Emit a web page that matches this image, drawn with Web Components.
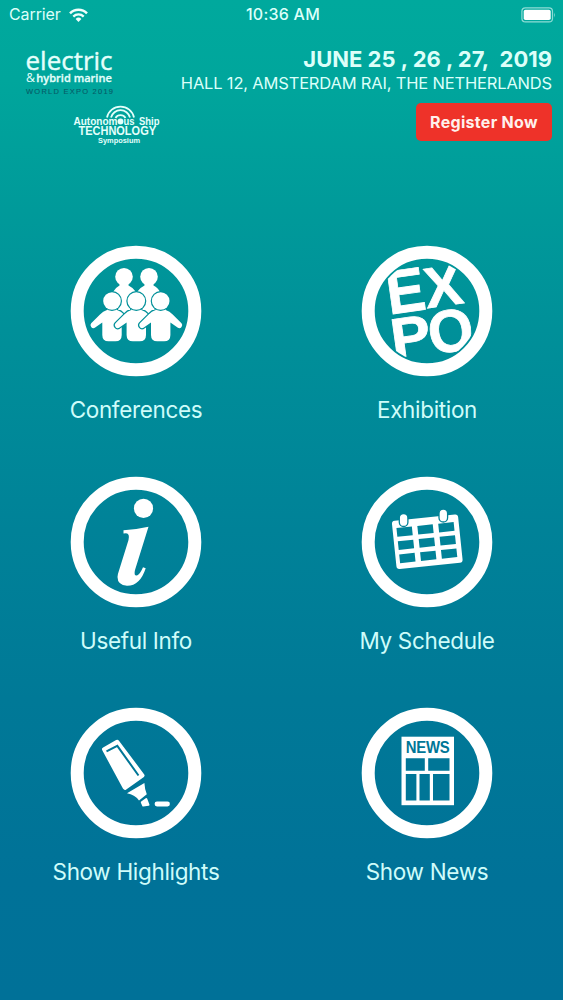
<!DOCTYPE html>
<html lang="en">
<head>
<meta charset="utf-8">
<meta name="viewport" content="width=device-width, initial-scale=1">
<title>Electric &amp; Hybrid Marine World Expo</title>
<style>
    body {
        margin: 0;
        font-family: Inter, "Liberation Sans", sans-serif;
    }
</style>
</head>
<body>
<expo-home>
    <status-bar slot="status" data-carrier="Carrier" data-time="10:36 AM"></status-bar>
    <expo-header slot="header">
        <expo-logos slot="logos"></expo-logos>
        <span slot="dates">JUNE 25 , 26 , 27,&nbsp; 2019</span>
        <span slot="venue">HALL 12, AMSTERDAM RAI, THE NETHERLANDS</span>
        <span slot="action">Register Now</span>
    </expo-header>
    <menu-tile data-icon="conferences">Conferences</menu-tile>
    <menu-tile data-icon="exhibition">Exhibition</menu-tile>
    <menu-tile data-icon="info">Useful Info</menu-tile>
    <menu-tile data-icon="schedule">My Schedule</menu-tile>
    <menu-tile data-icon="highlights">Show Highlights</menu-tile>
    <menu-tile data-icon="news">Show News</menu-tile>
</expo-home>

<script>
// Icons share a 132x132 box, the ring is drawn by the tile itself.
// --hole is the colour of the cut-out parts.
const ICONS = {
    conferences: `
        <defs>
            <g id="front">
                <path d="M-5 6h10v3q4 1 7 4.500L20.800 22.200a3 3 0 0 1-3.600 4.600L9.700 21.500v12.500q0 6.300-6.300 6.300h-6.800q-6.300 0-6.300-6.300V21.500L-17.200 26.800a3 3 0 0 1-3.600-4.600L-12 13.500q3-3.500 7-4.500z"/>
                <circle cx="0" cy="0" r="8.800"/>
            </g>
        </defs>
        <g fill="#fff">
            <path d="M49.500 38h9v2.500q4.500 2 7.500 6.500v23H43V47q2.500-4.500 6.500-6.500z"/>
            <circle cx="54" cy="31.700" r="8.800"/>
            <path d="M74.500 38h9v2.500q4.500 2 6.500 6.500v23H67V47q3-4.500 7.500-6.500z"/>
            <circle cx="79" cy="31.700" r="8.800"/>
        </g>
        <g fill="#fff" stroke="var(--hole)" stroke-width="2.400" paint-order="stroke">
            <use href="#front" x="42" y="56"/>
            <use href="#front" x="66.300" y="56"/>
            <use href="#front" x="90.700" y="56"/>
        </g>`,
    exhibition: `
        <clipPath id="disc"><circle cx="66" cy="66" r="50.500"/></clipPath>
        <g clip-path="url(#disc)" fill="#fff" stroke="#fff" stroke-width=".8" font-family="Liberation Sans, sans-serif" font-weight="700">
            <g transform="translate(28.300 69.500) rotate(-8)">
                <text font-size="62" textLength="38.500" lengthAdjust="spacingAndGlyphs">E</text>
            </g>
            <g transform="translate(66 63.300) rotate(-8)">
                <text font-size="57" textLength="38" lengthAdjust="spacingAndGlyphs">X</text>
            </g>
            <g transform="translate(32.500 113.300) rotate(-8)">
                <text font-size="56" textLength="39.500" lengthAdjust="spacingAndGlyphs">P</text>
            </g>
            <g transform="translate(70 109.500) rotate(-8)">
                <text font-size="60" textLength="45" lengthAdjust="spacingAndGlyphs">O</text>
            </g>
        </g>`,
    info: `
        <circle cx="73.500" cy="32.400" r="9.600" fill="#fff"/>
        <path fill="#fff" d="M53.500 54.300Q66 53.500 78.500 50.700L65 94Q63.500 100 67 99.500 70 98.500 73 91.300L75.700 92.300Q70 110 57 109.800 47.500 109 47.500 101 47.700 98 49 94.500L58.500 64Q60 57.500 56 57.200L53.500 57.600z"/>`,
    schedule: `
        <g transform="translate(66 65.500) rotate(-6)">
            <rect x="-33" y="-24" width="66.500" height="48.500" rx="3" fill="#fff"/>
            <g fill="var(--hole)">
                <path d="M-29-16.500h15.500v8.700h-15.500zM-8-16.500h15.500v8.700h-15.500zM13-16.500h15.500v8.700h-15.500z"/>
                <path d="M-29-3.300h15.500v8.700h-15.500zM-8-3.300h15.500v8.700h-15.500zM13-3.300h15.500v8.700h-15.500z"/>
                <path d="M-29 10h15.500v8.700h-15.500zM-8 10h15.500v8.700h-15.500zM13 10h15.500v8.700h-15.500z"/>
            </g>
        </g>
        <g fill="#fff" stroke="var(--hole)" stroke-width="1.300">
            <rect x="38.300" y="37.500" width="8.600" height="13" rx="4.300"/>
            <rect x="78" y="33" width="8.600" height="13" rx="4.300"/>
        </g>`,
    highlights: `
        <path fill="#fff" stroke="#fff" stroke-width="4.400" stroke-linejoin="round" d="M34.200 42.300 47.200 35 72.300 68.500 55 80.600z"/>
        <path fill="none" stroke="var(--hole)" stroke-width="2" d="M36.500 44.300 47.300 38.800 68.500 68.500"/>
        <path fill="#fff" d="M57 86.200 74.400 76q.2 5.500 2.400 11.200L69 93.400q-4.300-6-12-7.200z"/>
        <path fill="#fff" stroke="#fff" stroke-width="2" stroke-linejoin="round" d="M71.800 95.300 76.300 92 78.500 97.800 73.200 98.500z"/>
        <path stroke="#fff" stroke-width="4.800" stroke-linecap="round" d="M87 97H97.500"/>`,
    news: `
        <rect x="40.500" y="29.700" width="52.500" height="68.500" fill="#fff"/>
        <text x="44.800" y="46.200" fill="var(--hole)" font-family="Liberation Sans, sans-serif" font-weight="700" font-size="17" textLength="43.500" lengthAdjust="spacingAndGlyphs">NEWS</text>
        <path fill="var(--hole)" d="M44.800 51.200h19v12.600h-19zM67.200 51.200h21.300v12.600H67.200zM44.800 67h10.600v26.500H44.800zM58.500 67h10.300v26.500H58.500zM72 67h16.500v26.500H72z"/>`
};

class ExpoHome extends HTMLElement {
    constructor() {
        super();
        this.attachShadow({ mode: 'open' }).innerHTML = `
            <style>
                :host {
                    display: flex;
                    flex-direction: column;
                    min-height: 1000px;
                    background: linear-gradient(#00a99d 0, #00a69c 8%, #009a9a 21%, #009099 33%, #008298 53%, #007997 70%, #007298 88%, #007198 100%);
                }

                main {
                    display: grid;
                    grid-template-columns: 272px 272px;
                    grid-auto-rows: 231px;
                    column-gap: 19px;
                    padding-top: 60px;
                }
            </style>
            <slot name="status"></slot>
            <slot name="header"></slot>
            <main><slot></slot></main>
        `;
    }
}

class StatusBar extends HTMLElement {
    constructor() {
        super();
        this.attachShadow({ mode: 'open' });
    }

    connectedCallback() {
        this.shadowRoot.innerHTML = `
            <style>
                :host {
                    display: grid;
                    grid-template-columns: 1fr auto 1fr;
                    align-items: center;
                    height: 29px;
                    padding: 0 6px 0 9px;
                    color: #dcfff9;
                    font-size: 16px;
                    line-height: 29px;
                }

                .left {
                    display: flex;
                    align-items: center;
                    gap: 8px;
                    letter-spacing: -0.1px;
                }

                .time {
                    font-weight: 500;
                    letter-spacing: 0.25px;
                }

                .battery {
                    justify-self: end;
                }

                svg {
                    display: block;
                }
            </style>
            <div class="left">
                <span>${this.dataset.carrier}</span>
                <svg width="19" height="14" viewBox="0 0 19 14" fill="none" stroke="#f0fffc">
                    <path stroke-width="2.500" d="M1 5.300a12 12 0 0 1 17 0"/>
                    <path stroke-width="2.300" d="M4.300 8.600a7.400 7.400 0 0 1 10.400 0"/>
                    <path fill="#f0fffc" stroke="none" d="M6.600 11a4.200 4.200 0 0 1 5.800 0l-2.900 2.900z"/>
                </svg>
            </div>
            <div class="time">${this.dataset.time}</div>
            <svg class="battery" width="36" height="16" viewBox="0 0 36 16">
                <rect x=".9" y=".9" width="30.600" height="14" rx="3.500" fill="none" stroke="#8fdcd5" stroke-width="1.200"/>
                <rect x="2.700" y="2.700" width="27" height="10.400" rx="1.800" fill="#fff"/>
                <path d="M33 5.500q1.700 2.400 0 5z" fill="#8fdcd5"/>
            </svg>
        `;
    }
}

class ExpoLogos extends HTMLElement {
    constructor() {
        super();
        this.attachShadow({ mode: 'open' }).innerHTML = `
            <style>
                :host {
                    display: block;
                }

                svg {
                    display: block;
                }
            </style>
            <svg width="150" height="112" viewBox="20 35 150 112" fill="#e4fffb">
                <g font-family="Open Sans, Noto Sans, sans-serif">
                    <text x="25.500" y="70" font-size="26" font-weight="400" stroke="#e4fffb" stroke-width=".4" textLength="87" lengthAdjust="spacingAndGlyphs">electric</text>
                    <text x="26" y="82.300" font-size="12.500" textLength="9" lengthAdjust="spacingAndGlyphs">&amp;</text>
                    <text x="36.300" y="82.300" font-size="11.500" font-weight="600" stroke="#e4fffb" stroke-width=".3" textLength="75.500" lengthAdjust="spacingAndGlyphs">hybrid marine</text>
                </g>
                <g font-family="Liberation Sans, sans-serif">
                    <text x="26" y="93.600" font-size="7.500" fill="#075b67" stroke="#075b67" stroke-width=".1" textLength="87" lengthAdjust="spacing">WORLD EXPO 2019</text>
                    <g font-weight="700">
                        <text x="73.500" y="124.800" font-size="10.500" textLength="44" lengthAdjust="spacingAndGlyphs">Autonom</text>
                        <text x="123.500" y="124.800" font-size="10.500" textLength="36" lengthAdjust="spacingAndGlyphs" word-spacing="2">us Ship</text>
                        <text x="78.500" y="135" font-size="12" textLength="77.500" lengthAdjust="spacingAndGlyphs">TECHNOLOGY</text>
                        <text x="98" y="142.600" font-size="7.800" textLength="42" lengthAdjust="spacingAndGlyphs">Symposium</text>
                    </g>
                </g>
                <circle cx="120.500" cy="121.500" r="2.900"/>
                <g fill="none" stroke="#e4fffb" stroke-width="1.800">
                    <path d="M115.500 118a5.800 5.800 0 0 1 10 0"/>
                    <path d="M111 117.500a9.800 9.800 0 0 1 19 0"/>
                    <path d="M107 117.500a13.800 13.800 0 0 1 27 0"/>
                </g>
            </svg>
        `;
    }
}

class ExpoHeader extends HTMLElement {
    constructor() {
        super();
        this.attachShadow({ mode: 'open' }).innerHTML = `
            <style>
                :host {
                    display: flex;
                    justify-content: space-between;
                    height: 128px;
                    padding: 6px 11px 0 20px;
                    color: #dcfff9;
                    white-space: nowrap;
                }

                .details {
                    display: flex;
                    flex-direction: column;
                    align-items: flex-end;
                    padding-top: 10px;
                }

                .dates {
                    font-size: 22px;
                    font-weight: 700;
                    line-height: 28px;
                }

                .venue {
                    font-size: 16.500px;
                    letter-spacing: -0.18px;
                    line-height: 20px;
                }

                button {
                    width: 136px;
                    height: 38px;
                    margin: 10px 0 0;
                    padding: 0;
                    border: 0;
                    border-radius: 5px;
                    background: #ee3229;
                    color: #fff0ec;
                    font: 700 16px/38px Inter, "Liberation Sans", sans-serif;
                    letter-spacing: 0.3px;
                }
            </style>
            <slot name="logos"></slot>
            <div class="details">
                <div class="dates"><slot name="dates"></slot></div>
                <div class="venue"><slot name="venue"></slot></div>
                <button type="button"><slot name="action"></slot></button>
            </div>
        `;
    }
}

class MenuTile extends HTMLElement {
    constructor() {
        super();
        this.attachShadow({ mode: 'open' });
    }

    connectedCallback() {
        const holes = {
            conferences: '#009099',
            schedule: '#008298',
            highlights: '#007697',
            news: '#007697'
        };
        const icon = this.dataset.icon;

        this.shadowRoot.innerHTML = `
            <style>
                :host {
                    display: flex;
                    flex-direction: column;
                    align-items: center;
                    padding-top: 22px;
                    color: #cffcfa;
                    font-size: 22.500px;
                    letter-spacing: -0.33px;
                    line-height: 30px;
                    white-space: nowrap;
                    --hole: ${holes[icon] || 'transparent'};
                }

                svg {
                    display: block;
                    margin-bottom: 18px;
                }
            </style>
            <svg width="132" height="132" viewBox="0 0 132 132">
                <circle cx="66" cy="66" r="58.800" fill="none" stroke="#fff" stroke-width="13"/>
                ${ICONS[icon]}
            </svg>
            <span><slot></slot></span>
        `;
    }
}

customElements.define('expo-home', ExpoHome);
customElements.define('status-bar', StatusBar);
customElements.define('expo-logos', ExpoLogos);
customElements.define('expo-header', ExpoHeader);
customElements.define('menu-tile', MenuTile);
</script>
</body>
</html>
